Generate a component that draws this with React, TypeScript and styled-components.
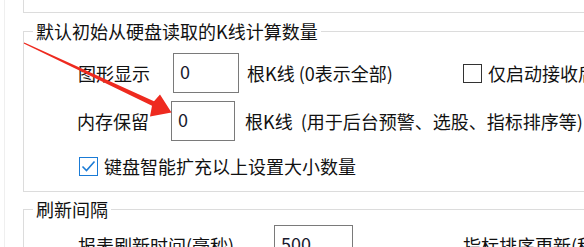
import React from "react";
import styled, { createGlobalStyle } from "styled-components";

const GlobalStyle = createGlobalStyle`
	html, body {
		margin: 0;
		padding: 0;
		background: #ffffff;
		overflow: hidden;
	}
	body {
		font-family: "Noto Sans CJK SC", "Noto Sans", sans-serif;
		font-size: 18px;
		color: #111111;
	}
`;

const Page = styled.div`
	position: relative;
	width: 584px;
	height: 247px;
	overflow: hidden;
	background: #ffffff;
`;

const Frame = styled.div`
	margin-left: 4px;
	height: 100%;
	border-left: 1px solid #efefef;
	padding-left: 18px;
`;

const PrevGroup = styled.div`
	width: 700px;
	height: 12px;
	border: 1px solid #dcdcdc;
	border-top: none;
`;

const Group = styled.fieldset<{ $top: number; $padTop: number; $padBottom: number }>`
	width: 700px;
	margin: ${({ $top }) => $top}px 0 0 0;
	padding: ${({ $padTop }) => $padTop}px 0 ${({ $padBottom }) => $padBottom}px 0;
	border: 1px solid #dcdcdc;
	min-inline-size: 0;
	box-sizing: border-box;
`;

const Legend = styled.legend`
	margin-left: 9px;
	padding: 0 3px;
	line-height: 24px;
	height: 24px;
	white-space: nowrap;
`;

const Row = styled.div<{ $gap?: number; $height?: number }>`
	display: flex;
	align-items: center;
	height: ${({ $height }) => $height ?? 40}px;
	margin-top: ${({ $gap }) => $gap ?? 0}px;
	white-space: pre;
`;

const Label = styled.span<{ $left: number; $width: number }>`
	margin-left: ${({ $left }) => $left}px;
	width: ${({ $width }) => $width}px;
	flex: none;
	line-height: 24px;
`;

const Field = styled.input<{ $width: number }>`
	flex: none;
	box-sizing: border-box;
	width: ${({ $width }) => $width}px;
	height: 40px;
	margin: 0;
	padding: 0 0 4px 6px;
	border: 1px solid #7a7a7a;
	border-radius: 0;
	background: #ffffff;
	font-family: "Noto Sans CJK SC", "Noto Sans", sans-serif;
	font-size: 18px;
	color: #1a1a2e;
	outline: none;
`;

const Unit = styled.span<{ $gap: number; $width?: number }>`
	margin-left: ${({ $gap }) => $gap}px;
	width: ${({ $width }) => ($width ? `${$width}px` : "auto")};
	flex: none;
	line-height: 24px;
`;

const Option = styled.label<{ $left?: number }>`
	display: flex;
	align-items: center;
	gap: 6px;
	margin-left: ${({ $left }) => $left ?? 0}px;
	line-height: 24px;
	flex: none;
`;

const Box = styled.span<{ $checked?: boolean }>`
	display: flex;
	align-items: center;
	justify-content: center;
	box-sizing: border-box;
	width: 19px;
	height: 19px;
	border: 1px solid ${({ $checked }) => ($checked ? "#1a7bd6" : "#333333")};
	background: #ffffff;
`;

const Overlay = styled.svg`
	position: absolute;
	left: 0;
	top: 0;
	pointer-events: none;
`;

const Checkbox = ({ checked, children, left }: { checked?: boolean; children: React.ReactNode; left?: number }) => (
	<Option $left={left}>
		<Box $checked={checked}>
			{checked && (
				<svg width="15" height="15" viewBox="0 0 15 15">
					<path d="M1.5 7.5 L5.5 11.5 L13.5 2.5" fill="none" stroke="#1a7bd6" strokeWidth="1.6" />
				</svg>
			)}
		</Box>
		<span>{children}</span>
	</Option>
);

export default function App() {
	return (
		<Page>
			<GlobalStyle />
			<Frame>
				<PrevGroup />

				<Group $top={6} $padTop={10} $padBottom={13}>
					<Legend>默认初始从硬盘读取的K线计算数量</Legend>
					<Row>
						<Label $left={54} $width={95}>图形显示</Label>
						<Field $width={66} defaultValue="0" readOnly />
						<Unit $gap={8} $width={216}>根K线 (0表示全部)</Unit>
						<Checkbox>仅启动接收后台数据</Checkbox>
					</Row>
					<Row $gap={8}>
						<Label $left={53} $width={94}>内存保留</Label>
						<Field $width={64} defaultValue="0" readOnly />
						<Unit $gap={10}>根K线  (用于后台预警、选股、指标排序等)</Unit>
					</Row>
					<Row $gap={13} $height={24}>
						<Checkbox checked left={55}>键盘智能扩充以上设置大小数量</Checkbox>
					</Row>
				</Group>

				<Group $top={5} $padTop={4} $padBottom={10}>
					<Legend>刷新间隔</Legend>
					<Row>
						<Label $left={54} $width={196}>报表刷新时间(毫秒)</Label>
						<Field $width={79} defaultValue="500" readOnly />
						<Unit $gap={110}>指标排序更新(秒)</Unit>
					</Row>
				</Group>
			</Frame>

			<Overlay width="584" height="247" viewBox="0 0 584 247">
				<polygon
					points="24.3,42.4 154,101.3 160,94.5 171.5,112.5 150,116.5 152,105.8 23.7,43.6"
					fill="#ee2a1f"
				/>
			</Overlay>
		</Page>
	);
}
